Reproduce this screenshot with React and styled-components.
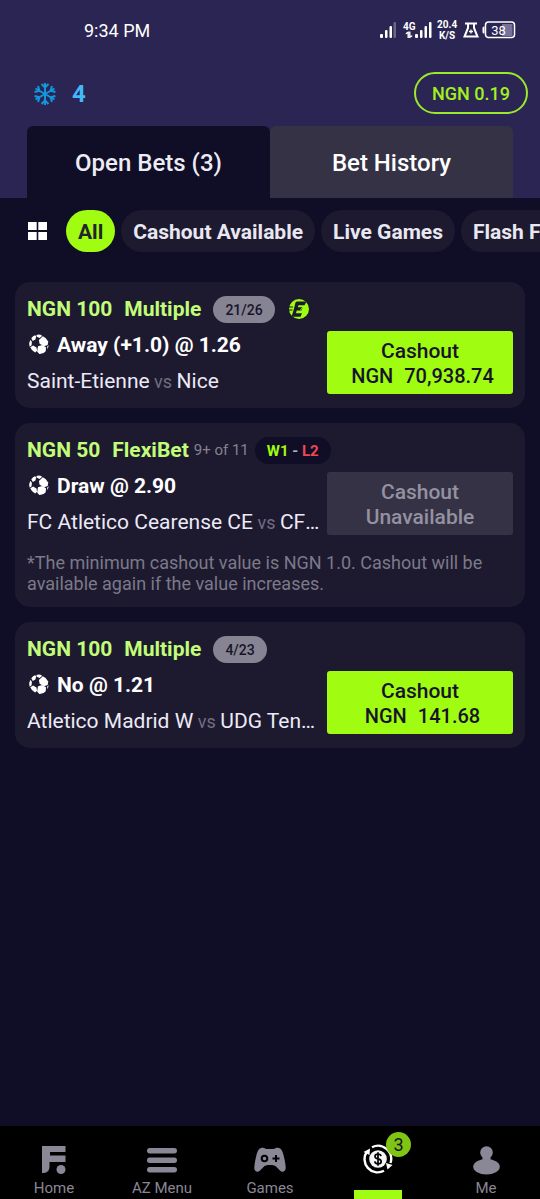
import React, { useState } from 'react';
import styled, { createGlobalStyle } from 'styled-components';

const GlobalStyle = createGlobalStyle`
    * {
        box-sizing: border-box;
    }
    body {
        margin: 0;
        background: #100d26;
        color: #fff;
        font-family: Roboto, "Liberation Sans", sans-serif;
    }
    button {
        font-family: inherit;
        border: none;
        margin: 0;
        cursor: pointer;
    }
    h2, p {
        margin: 0;
    }
    svg {
        display: block;
        flex-shrink: 0;
    }
`
const Page = styled.div`
    display: flex;
    flex-direction: column;
    min-height: 100vh;
`
const Header = styled.header`
    background: #2b2553;
`
const StatusBar = styled.div`
    display: flex;
    align-items: center;
    justify-content: space-between;
    height: 60px;
    padding: 0 24px 0 84px;
    font-size: 18px;
`
const StatusIcons = styled.div`
    display: flex;
    align-items: center;
`
const Signals = styled.div`
    display: flex;
    gap: 6px;
`
const Speed = styled.div`
    width: 20px;
    margin: 0 6px 0 5px;
    font-size: 10px;
    font-weight: 700;
    line-height: 11px;
    text-align: center;
`
const Power = styled.div`
    display: flex;
    align-items: center;
    gap: 3px;
`
const AccountRow = styled.div`
    display: flex;
    align-items: center;
    justify-content: space-between;
    height: 66px;
    padding: 0 12px 0 34px;
`
const Streak = styled.div`
    display: flex;
    align-items: center;
    gap: 16px;
    padding-top: 2px;
    color: #42b8f8;
    font-size: 24px;
    font-weight: 700;
`
const Balance = styled.button`
    height: 42px;
    padding: 0 16px;
    border: solid 2px #9be82c;
    border-radius: 21px;
    background: none;
    color: #a2f01f;
    font-size: 18px;
    font-weight: 500;
`
const Tabs = styled.div`
    display: flex;
    padding: 0 27px;
`
const Tab = styled.button`
    flex: 1;
    height: 72px;
    padding: 2px 0 0;
    border-radius: 6px 6px 0 0;
    background: ${props => props.$active ? '#100d26' : '#353246'};
    color: ${props => props.$active ? '#ececf4' : '#fff'};
    font-size: 24px;
    font-weight: 500;
`
const Filters = styled.div`
    display: flex;
    align-items: center;
    gap: 6px;
    padding: 12px 0 12px 28px;
    overflow: hidden;
`
const GridButton = styled.button`
    margin-right: 13px;
    padding: 0;
    background: none;
`
const Pill = styled.button`
    flex-shrink: 0;
    height: 42px;
    padding: 2px 12px 0;
    border-radius: 21px;
    background: ${props => props.$active ? '#a0fc10' : '#1d1a30'};
    color: ${props => props.$active ? '#23252b' : '#e9e8f1'};
    font-size: 21px;
    font-weight: 700;
    white-space: nowrap;
`
const BetList = styled.main`
    display: flex;
    flex: 1;
    flex-direction: column;
    gap: 15px;
    padding: 18px 15px;
`
const Card = styled.article`
    padding: 12px 12px 13px;
    border-radius: 15px;
    background: #1d1a30;
`
const CardHead = styled.div`
    display: flex;
    align-items: center;
    height: 30px;
    margin-bottom: 7px;
`
const BetTitle = styled.h2`
    display: flex;
    gap: 12px;
    color: #c2fc78;
    font-size: 21px;
    font-weight: 700;
`
const Legs = styled.span`
    margin-left: 5px;
    color: #85828f;
    font-size: 15px;
`
const Badge = styled.span`
    height: 27px;
    margin-left: ${props => props.$dark ? 6 : 12}px;
    padding: 0 12px;
    border-radius: 14px;
    background: ${props => props.$dark ? '#100d26' : '#868392'};
    color: ${props => props.$dark ? '#b5b3c0' : '#17142a'};
    font-size: ${props => props.$dark ? 15 : 14}px;
    font-weight: ${props => props.$dark ? 700 : 500};
    line-height: 28px;
`
const Won = styled.span`
    color: #a0fc10;
`
const Lost = styled.span`
    color: #f0474f;
`
const EditMark = styled.span`
    margin-left: 13px;
`
const CardBody = styled.div`
    display: flex;
    align-items: flex-start;
    gap: 4px;
`
const Match = styled.div`
    flex: 1;
    min-width: 0;
`
const Pick = styled.div`
    display: flex;
    align-items: center;
    gap: 6px;
    height: 27px;
    font-size: 21px;
    font-weight: 700;
`
const Teams = styled.p`
    height: 28px;
    margin-top: 9px;
    overflow: hidden;
    color: #eceaf6;
    font-size: 21px;
    line-height: 28px;
    text-overflow: ellipsis;
    white-space: nowrap;
`
const Versus = styled.span`
    color: #716e80;
    font-size: 18px;
`
const CashoutButton = styled.button`
    flex: 0 0 186px;
    height: 63px;
    padding: 2px 0 0;
    border-radius: 3px;
    background: #a0fc10;
    color: #17142a;
    font-size: 21px;
    font-weight: 500;
    line-height: 25px;
    &:disabled {
        background: #353246;
        color: #9491a0;
        cursor: default;
    }
`
const Amount = styled.span`
    display: flex;
    justify-content: center;
    gap: 11px;
    padding-left: 5px;
    font-size: 20px;
`
const Note = styled.p`
    margin-top: 16px;
    color: #7c7988;
    font-size: 18px;
    line-height: 21px;
`
const BottomNav = styled.nav`
    display: flex;
    height: 73px;
    background: #000;
`
const NavItem = styled.a`
    display: flex;
    flex: 1;
    flex-direction: column;
    align-items: center;
    justify-content: space-between;
    padding-top: ${props => props.$active ? 17 : 18}px;
    color: ${props => props.$active ? '#fff' : '#8a8796'};
    font-size: 15px;
    line-height: 22px;
    text-decoration: none;
`
const IconSlot = styled.span`
    position: relative;
    display: flex;
    align-items: center;
    height: 32px;
`
const Count = styled.span`
    position: absolute;
    top: -11px;
    left: 23px;
    width: 25px;
    height: 25px;
    border-radius: 50%;
    background: #80c414;
    color: #17142a;
    font-size: 18px;
    line-height: 26px;
    text-align: center;
`
const ActiveBar = styled.span`
    width: 48px;
    height: 9px;
    background: #a0fc10;
`

const SignalIcon = () => (
    <svg width="17" height="18" viewBox="0 0 17 18" fill="#fff">
        <rect x="0" y="13" width="3" height="4" rx="1" />
        <rect x="5" y="9" width="2.5" height="8" rx="1" />
        <rect x="9.5" y="5" width="2.5" height="12" rx="1" />
        <rect x="13.5" y="1" width="2.5" height="16" rx="1" opacity="0.3" />
    </svg>
)

const LteIcon = () => (
    <svg width="29" height="18" viewBox="0 0 29 18" fill="#fff">
        <text x="0" y="9" fontSize="10" fontWeight="700">4G</text>
        <path d="M4.500 17v-4.500l-1.700 1v-1.400l2.200-1.600h.9V17zM7.500 10.500V15l1.700-1v1.400L7 17h-.9v-6.500z" />
        <rect x="12" y="13" width="3" height="4" rx="1" />
        <rect x="17" y="9" width="2.500" height="8" rx="1" />
        <rect x="21.500" y="5" width="2.500" height="12" rx="1" />
        <rect x="26" y="1" width="2.500" height="16" rx="1" />
    </svg>
)

const FlaskIcon = () => (
    <svg width="16" height="16" viewBox="0 0 16 16" fill="none" stroke="#fff" strokeWidth="2">
        <path d="M2 1.500h12M5 2v4L1.500 14.500h13L11 6V2" />
        <path d="M8 7.500v4M6 9.500h4" strokeWidth="1.300" />
    </svg>
)

const BatteryIcon = () => (
    <svg width="34" height="18" viewBox="0 0 34 18">
        <path d="M2.500 5.500H2A1.500 1.500 0 0 0 .5 7v4A1.500 1.500 0 0 0 2 12.500h.5z" fill="#fff" />
        <rect x="20" y="3" width="10.500" height="12" fill="#77729a" />
        <rect x="3.500" y="1" width="29" height="15.500" rx="3" fill="none" stroke="#fff" strokeWidth="1.500" />
        <text x="16.500" y="13.500" fontSize="13" fill="#fff" textAnchor="middle">38</text>
    </svg>
)

const SnowIcon = () => (
    <svg width="22" height="24" viewBox="-11 -12 22 24" fill="none" stroke="#1296dc" strokeWidth="2">
        {[0, 60, 120, 180, 240, 300].map(a => (
            <path key={a} transform={`rotate(${a})`} d="M0 0V-11M-3.500 -10L0 -6.500L3.500 -10" />
        ))}
    </svg>
)

const GridIcon = () => (
    <svg width="19" height="18" viewBox="0 0 19 18" fill="#fff">
        <path d="M0 0h8.700v8H0zM10.300 0H19v8h-8.700zM0 10h8.700v8H0zM10.300 10H19v8h-8.700z" />
    </svg>
)

const BallIcon = () => (
    <svg width="24" height="22" viewBox="0 0 24 22" fill="#fff">
        <path d="M4.300 4.200Q6 2 8 1.300l1.300 1-.9 3.200-2.600 1.600z" />
        <path d="M9.300 1Q12 .2 14.500 1l.3 1.300-2.300 1.800-2.600-1.300z" />
        <path d="M15.800 2.300q3.700 1.400 5.400 5.200l-.5 3.500-3.600 1.200-4.500-2.400-.7-3.900z" />
        <path d="M3.600 5.800l1.300 2.200-.3 3.300-1.900 1.400Q1.400 9 3.600 5.800z" />
        <path d="M3.300 13.200l2.800-1.700 3.400 1.900.6 3.400-2 1.700Q4.700 17 3.300 13.200z" />
        <path d="M11 12.200l4.200-1.200 3.800 2.300-.3 3.900q-2.400 3.100-6.400 2.900l-2.200-2.500z" />
        <path d="M20.300 12.300l1.300-1q0 2.400-1.500 4z" />
    </svg>
)

const EditIcon = () => (
    <svg width="22" height="22" viewBox="0 0 22 22">
        <circle cx="11" cy="11" r="10" fill="#a0fc10" />
        <path d="M7.500 4.500Q8 3.500 9.500 3.500H18.500L16.500 7.300h-6L9.800 9.300h5l-1.300 3.200H8.700L8 15.300h6L12.500 18.700H3.500L5.500 12.500z" fill="#1d1a30" />
        <path d="M1 9h4M1 12h3.500" stroke="#1d1a30" strokeWidth="1" />
        <path d="M15.500 8.500l-3 3.500" stroke="#a0fc10" strokeWidth="1" />
    </svg>
)

const HomeIcon = () => (
    <svg width="24" height="28" viewBox="0 0 24 28" fill="#8a8796">
        <path d="M0 0h23.500v6H8v3.500h15.500V16H7.500v4.500q0 6.500-6 6.500H0z" />
        <circle cx="19" cy="23.500" r="4.500" />
    </svg>
)

const MenuIcon = () => (
    <svg width="30" height="25" viewBox="0 0 30 25" fill="#8a8796">
        <rect y="0" width="30" height="5.500" rx="2.700" />
        <rect y="9.500" width="30" height="5.500" rx="2.700" />
        <rect y="19" width="30" height="5.500" rx="2.700" />
    </svg>
)

const GamepadIcon = () => (
    <svg width="34" height="26" viewBox="0 0 34 26">
        <path d="M10 .8c1.600 0 2 1.200 3.500 1.200h7C22 2 22.400.8 24 .8c4 0 5.300 2.400 6.700 8 1.300 5.200 2 9.800 2 12.200 0 3.500-3.300 5-5.500 2.800L22.500 19c-1.500-1.500-9.500-1.500-11 0l-4.700 4.800C4.600 26 1.300 24.500 1.300 21c0-2.400.7-7 2-12.200C4.700 3.200 6 .8 10 .8z" fill="#8a8796" />
        <circle cx="11.500" cy="11.500" r="2.800" fill="none" stroke="#000" strokeWidth="2" />
        <path d="M23 8v7M19.500 11.500h7" stroke="#000" strokeWidth="2" />
    </svg>
)

const CoinIcon = () => (
    <svg width="30" height="30" viewBox="0 0 30 30">
        <circle cx="15" cy="15" r="8.800" fill="#f4f4f6" />
        <path d="M18 12.200c-.3-1.500-1.600-2.100-3-2.100-1.700 0-3 .8-3 2.300 0 3.300 6.200 1.600 6.200 5 0 1.600-1.500 2.400-3.200 2.400-1.600 0-3-.8-3.200-2.400M15 8.300v13.400" fill="none" stroke="#000" strokeWidth="1.700" />
        <g fill="none" stroke="#fff" strokeWidth="2.400">
            <path d="M9 3.200A13.200 13.200 0 0 1 27.500 19" />
            <path d="M21 26.800A13.200 13.200 0 0 1 4 7.500" />
        </g>
        <path d="M.5 8L7 4.500l-.5 6.500zM23 19l6.500 2-5 4.500z" fill="#fff" />
    </svg>
)

const MeIcon = () => (
    <svg width="27" height="29" viewBox="0 0 27 29" fill="#8a8796">
        <circle cx="13.500" cy="6.500" r="6.300" />
        <path d="M9.500 10h8v5h-8z" />
        <ellipse cx="13.500" cy="20.700" rx="13.300" ry="7.800" />
    </svg>
)

const filters = ['All', 'Cashout Available', 'Live Games', 'Flash Football']

const bets = [
    { id: 1, stake: 'NGN 100', type: 'Multiple', badge: '21/26', edited: true, pick: 'Away (+1.0) @ 1.26', home: 'Saint-Etienne', away: 'Nice', cashout: '70,938.74' },
    { id: 2, stake: 'NGN 50', type: 'FlexiBet', legs: '9+ of 11', won: 'W1', lost: 'L2', pick: 'Draw @ 2.90', home: 'FC Atletico Cearense CE', away: 'CF Fortaleza', note: '*The minimum cashout value is NGN 1.0. Cashout will be available again if the value increases.' },
    { id: 3, stake: 'NGN 100', type: 'Multiple', badge: '4/23', pick: 'No @ 1.21', home: 'Atletico Madrid W', away: 'UDG Tenerife', cashout: '141.68' },
]

const BetCard = ({bet}) => (
    <Card>
        <CardHead>
            <BetTitle><span>{bet.stake}</span><span>{bet.type}</span></BetTitle>
            {bet.legs && <Legs>{bet.legs}</Legs>}
            {bet.badge && <Badge>{bet.badge}</Badge>}
            {bet.won && <Badge $dark><Won>{bet.won}</Won> - <Lost>{bet.lost}</Lost></Badge>}
            {bet.edited && <EditMark><EditIcon /></EditMark>}
        </CardHead>
        <CardBody>
            <Match>
                <Pick><BallIcon />{bet.pick}</Pick>
                <Teams>{bet.home}<Versus> vs </Versus>{bet.away}</Teams>
            </Match>
            {bet.cashout
                ? <CashoutButton>Cashout<Amount><span>NGN</span><span>{bet.cashout}</span></Amount></CashoutButton>
                : <CashoutButton disabled>Cashout<br />Unavailable</CashoutButton>}
        </CardBody>
        {bet.note && <Note>{bet.note}</Note>}
    </Card>
)

const App = () => {
    const [tab, setTab] = useState('open')
    const [filter, setFilter] = useState('All')

return (
    <Page>
        <GlobalStyle />
        <Header>
            <StatusBar>
                <span>9:34 PM</span>
                <StatusIcons>
                    <Signals><SignalIcon /><LteIcon /></Signals>
                    <Speed>20.4 K/S</Speed>
                    <Power><FlaskIcon /><BatteryIcon /></Power>
                </StatusIcons>
            </StatusBar>
            <AccountRow>
                <Streak><SnowIcon />4</Streak>
                <Balance>NGN 0.19</Balance>
            </AccountRow>
            <Tabs>
                <Tab $active={tab === 'open'} onClick={() => setTab('open')}>Open Bets (3)</Tab>
                <Tab $active={tab === 'history'} onClick={() => setTab('history')}>Bet History</Tab>
            </Tabs>
        </Header>
        <Filters>
            <GridButton aria-label="Layout"><GridIcon /></GridButton>
            {filters.map(name => (
                <Pill key={name} $active={filter === name} onClick={() => setFilter(name)}>{name}</Pill>
            ))}
        </Filters>
        <BetList>
            {bets.map(bet => <BetCard key={bet.id} bet={bet} />)}
        </BetList>
        <BottomNav>
            <NavItem href="#home"><IconSlot><HomeIcon /></IconSlot>Home</NavItem>
            <NavItem href="#menu"><IconSlot><MenuIcon /></IconSlot>AZ Menu</NavItem>
            <NavItem href="#games"><IconSlot><GamepadIcon /></IconSlot>Games</NavItem>
            <NavItem href="#bets" $active aria-label="Open bets">
                <IconSlot><CoinIcon /><Count>3</Count></IconSlot>
                <ActiveBar />
            </NavItem>
            <NavItem href="#me"><IconSlot><MeIcon /></IconSlot>Me</NavItem>
        </BottomNav>
    </Page>)
}

export default App
